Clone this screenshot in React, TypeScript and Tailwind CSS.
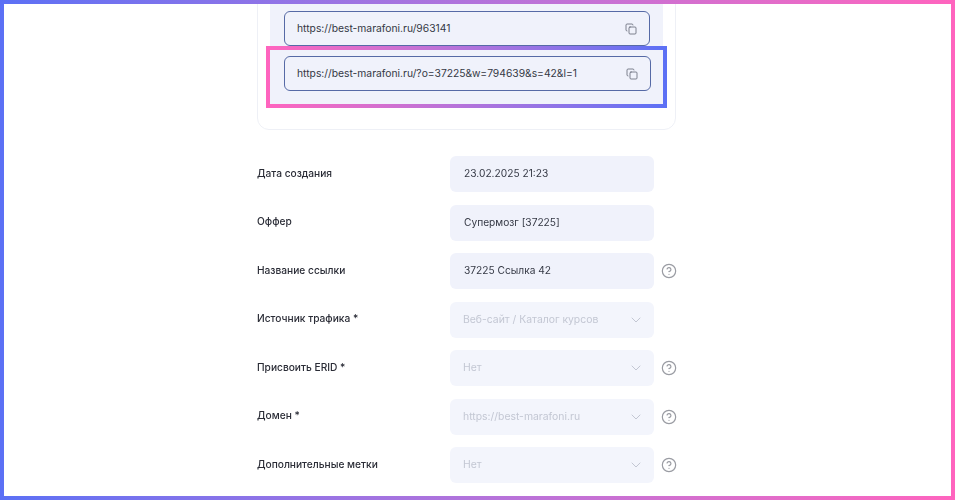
import { ChevronDown, CircleHelp, Copy } from "lucide-react";

const rows = [
  { label: "Дата создания", value: "23.02.2025 21:23" },
  { label: "Оффер", value: "Супермозг [37225]" },
  { label: "Название ссылки", value: "37225 Ссылка 42", help: true },
  { label: "Источник трафика *", value: "Веб-сайт / Каталог курсов", select: true },
  { label: "Присвоить ERID *", value: "Нет", select: true, help: true },
  { label: "Домен *", value: "https://best-marafoni.ru", select: true, help: true },
  { label: "Дополнительные метки", value: "Нет", select: true, help: true },
];

function LinkField({ url }: { url: string }) {
  return (
    <div className="flex h-[35px] items-center justify-between rounded-[6px] border border-[#566aa6] bg-[#f0f2fb] pl-[12px] pr-[12px] text-[10.3px] text-[#343844]">
      <span>{url}</span>
      <Copy className="h-[12px] w-[12px] text-[#5f6474]" strokeWidth={1.6} />
    </div>
  );
}

export default function App() {
  return (
    <div className="h-[500px] w-[955px] overflow-hidden bg-gradient-to-r from-[#5b70f5] to-[#ff64be] p-[4px] font-['Inter',sans-serif]">
      <div className="h-[492px] overflow-hidden bg-white pl-[253px]">
        <div className="blur-[0.35px]">
          {/* Links card, cut off by the top of the frame */}
          <div className="-mt-[21px] w-[419px] rounded-[12px] border border-[#eef0f6] px-[12px] pb-[24px]">
            <div className="rounded-b-[8px] bg-[#f0f2fb] pl-[14px] pr-[13px] pt-[27px]">
              <LinkField url="https://best-marafoni.ru/963141" />
              {/* Highlight frame around the second link */}
              <div className="-mb-[3px] -ml-[18px] -mr-[17px] bg-gradient-to-r from-[#ff64be] to-[#5b70f5] p-[4px]">
                <div className="bg-[#f0f2fb] pb-[13px] pl-[14px] pr-[12px] pt-[6px]">
                  <LinkField url="https://best-marafoni.ru/?o=37225&w=794639&s=42&l=1" />
                </div>
              </div>
            </div>
          </div>

          <div className="mt-[26px] flex w-[430px] flex-col gap-[12.5px]">
            {rows.map((row) => (
              <div key={row.label} className="flex items-center">
                <div className="-mt-[1px] w-[193px] text-[10.2px] font-medium text-[#2a2c36]">{row.label}</div>
                <div
                  className={
                    row.select
                      ? "flex h-[36px] w-[204px] items-center justify-between rounded-[6px] bg-[#f3f5fc] pl-[13px] pr-[10px] text-[10.4px] text-[#c3c7d3]"
                      : "flex h-[36px] w-[204px] items-center rounded-[6px] bg-[#f0f2fb] pl-[14px] text-[10.2px] text-[#343844]"
                  }
                >
                  <span>{row.value}</span>
                  {row.select && <ChevronDown className="h-[16px] w-[16px] text-[#c3c7d3]" strokeWidth={1.5} />}
                </div>
                {row.help && <CircleHelp className="ml-[7px] h-[16px] w-[16px] text-[#9a9ca3]" strokeWidth={1.8} />}
              </div>
            ))}
          </div>
        </div>
      </div>
    </div>
  );
}
